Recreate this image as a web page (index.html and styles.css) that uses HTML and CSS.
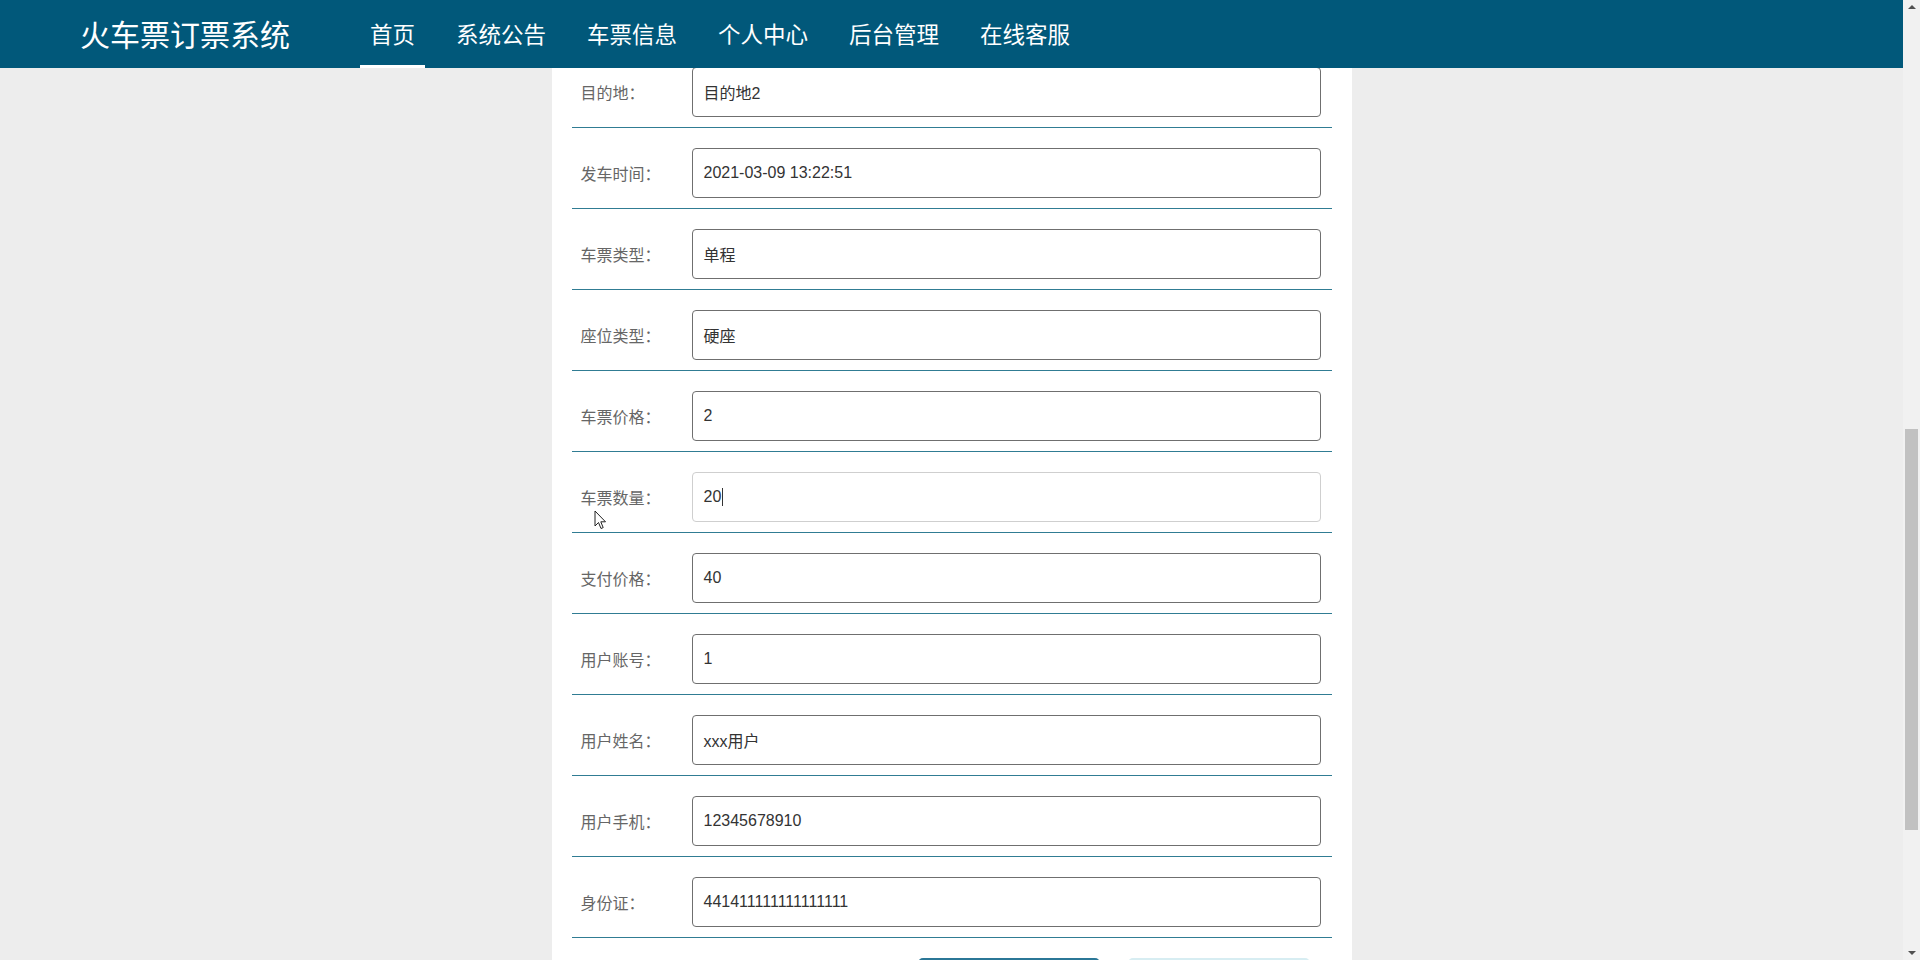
FILE: index.html
```html
<!DOCTYPE html>
<html lang="zh-CN">
<head>
    <meta charset="UTF-8">
    <meta name="viewport" content="width=device-width, initial-scale=1.0">
    <title>火车票订票系统 - 订单详情</title>
    <link rel="stylesheet" href="styles.css">
</head>
<body>
    <div class="page">
        <div class="main">
            <header class="topbar">
                <div class="brand">火车票订票系统</div>
                <ul class="nav">
                    <li class="active">首页</li>
                    <li>系统公告</li>
                    <li>车票信息</li>
                    <li>个人中心</li>
                    <li>后台管理</li>
                    <li>在线客服</li>
                </ul>
            </header>

            <div class="content">
                <div class="card">
                    <div class="form">
                        <div class="form-row">
                            <label class="form-label">目的地：</label>
                            <div class="field">目的地2</div>
                        </div>
                        <div class="form-row">
                            <label class="form-label">发车时间：</label>
                            <div class="field">2021-03-09 13:22:51</div>
                        </div>
                        <div class="form-row">
                            <label class="form-label">车票类型：</label>
                            <div class="field">单程</div>
                        </div>
                        <div class="form-row">
                            <label class="form-label">座位类型：</label>
                            <div class="field">硬座</div>
                        </div>
                        <div class="form-row">
                            <label class="form-label">车票价格：</label>
                            <div class="field">2</div>
                        </div>
                        <div class="form-row">
                            <label class="form-label">车票数量：</label>
                            <div class="field focused">20<span class="caret"></span></div>
                        </div>
                        <div class="form-row">
                            <label class="form-label">支付价格：</label>
                            <div class="field">40</div>
                        </div>
                        <div class="form-row">
                            <label class="form-label">用户账号：</label>
                            <div class="field">1</div>
                        </div>
                        <div class="form-row">
                            <label class="form-label">用户姓名：</label>
                            <div class="field">xxx用户</div>
                        </div>
                        <div class="form-row">
                            <label class="form-label">用户手机：</label>
                            <div class="field">12345678910</div>
                        </div>
                        <div class="form-row">
                            <label class="form-label">身份证：</label>
                            <div class="field">441411111111111111</div>
                        </div>
                        <!-- buttons sit just below the fold, only their top edge shows -->
                        <div class="form-actions">
                            <button class="btn btn-primary" aria-label="提交"></button>
                            <button class="btn btn-light" aria-label="取消"></button>
                        </div>
                    </div>
                </div>
            </div>
        </div>

        <!-- page scrollbar (page is scrolled down) -->
        <div class="scrollbar">
            <div class="arrow up"></div>
            <div class="track"><div class="thumb"></div></div>
            <div class="arrow down"></div>
        </div>

        <svg class="cursor" width="13" height="20" viewBox="0 0 13 20">
            <path d="M1 1 L1 16 L4.5 12.5 L7 18.5 L9.2 17.6 L6.8 11.8 L11.5 11.8 Z" fill="#fff" stroke="#222" stroke-width="1" stroke-linejoin="round"/>
        </svg>
    </div>
</body>
</html>
```

FILE: styles.css
```css
* {
    box-sizing: border-box;
}
body {
    margin: 0;
    height: 100vh;
    overflow: hidden;
    background: #ededed;
    font-family: "Liberation Sans", "Noto Sans CJK SC", sans-serif;
}
.page {
    position: relative;
    display: flex;
    height: 100vh;
}
.main {
    flex: 1;
    display: flex;
    flex-direction: column;
    min-width: 0;
}
.topbar {
    height: 68px;
    flex: none;
    display: flex;
    align-items: stretch;
    padding-left: 80px;
    background: #01587a;
    color: #fff;
    position: relative;
    z-index: 2;
}
.brand {
    display: flex;
    align-items: center;
    font-family: "Noto Sans CJK SC", sans-serif;
    font-size: 30px;
    line-height: 1;
    margin-right: 70px;
    padding-bottom: 2px;
}
.nav {
    list-style: none;
    margin: 0;
    padding: 0;
    display: flex;
    gap: 21px;
}
.nav li {
    display: flex;
    align-items: center;
    padding: 0 10px;
    font-family: "Noto Sans CJK SC", sans-serif;
    font-size: 22.5px;
    line-height: 1;
    border-bottom: 3px solid transparent;
    padding-top: 1px;
}
.nav li.active {
    border-bottom-color: #fff;
}
.content {
    flex: 1;
    display: flex;
    justify-content: center;
    overflow: hidden;
}
.card {
    width: 800px;
    background: #fff;
    padding: 0 20px;
}
.form {
    margin-top: -21px;
}
.form-row {
    display: flex;
    align-items: center;
    padding: 20px 0 10px;
    border-bottom: 1px solid #307c93;
}
.form-label {
    width: 120px;
    padding-left: 9px;
    font-size: 16px;
    color: #666;
}
.field {
    width: 629px;
    height: 50px;
    display: flex;
    align-items: center;
    padding: 0 11px;
    border: 1px solid #6f6f6f;
    border-radius: 4px;
    font-size: 16px;
    color: #333;
}
.field.focused {
    border-color: #cfcfcf;
}
.caret {
    display: inline-block;
    width: 1px;
    height: 18px;
    margin-left: 1px;
    background: #333;
}
.form-actions {
    display: flex;
    justify-content: flex-end;
    gap: 28px;
    padding: 20px 22px 0 0;
}
.btn {
    width: 182px;
    height: 40px;
    border: none;
    border-radius: 5px;
    font-size: 15px;
    font-family: inherit;
}
.btn-primary {
    background: #2b7797;
    color: #fff;
}
.btn-light {
    background: #d7edf2;
    color: #2b7797;
}
.scrollbar {
    width: 17px;
    flex: none;
    display: flex;
    flex-direction: column;
    background: #f1f1f1;
}
.arrow {
    height: 17px;
    flex: none;
    display: flex;
    justify-content: center;
}
.arrow.up {
    align-items: flex-start;
    padding-top: 5px;
}
.arrow.down {
    align-items: flex-end;
    padding-bottom: 5px;
}
.arrow::before {
    content: "";
    border-left: 4px solid transparent;
    border-right: 4px solid transparent;
}
.arrow.up::before {
    border-bottom: 4px solid #505050;
}
.arrow.down::before {
    border-top: 4px solid #505050;
}
.track {
    flex: 1;
}
.thumb {
    margin: 412px 2px 0;
    height: 401px;
    background: #c1c1c1;
}
.cursor {
    position: absolute;
    left: 594px;
    top: 510px;
}
```
